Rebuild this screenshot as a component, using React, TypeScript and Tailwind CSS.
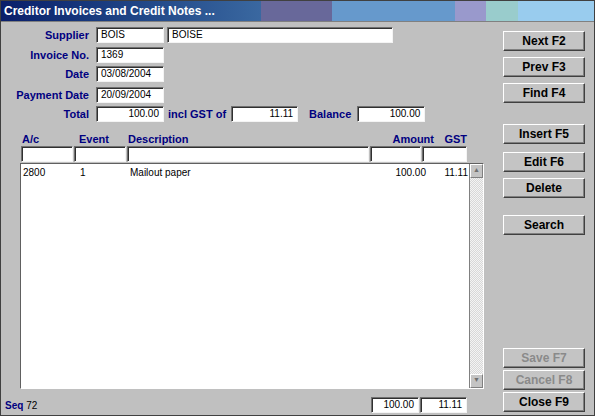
import React from 'react';

const font = { fontFamily: '"Liberation Sans", Arial, sans-serif' };

const Field = ({ w, value, right = false }: { w: string; value?: string; right?: boolean }) => (
  <div
    className={`${w} h-[16px] bg-white border border-t-[#707070] border-l-[#707070] border-b-[#f4f4f4] border-r-[#f4f4f4] shadow-[inset_1px_1px_0_#303030] text-[10px] leading-[14px] px-[4px] text-black whitespace-nowrap ${right ? 'text-right' : ''}`}
  >
    {value}
  </div>
);

const Label = ({ children }: { children: React.ReactNode }) => (
  <div className="w-[81px] text-right text-[11px] font-bold text-[#000080] leading-[16px] whitespace-nowrap">{children}</div>
);

const Btn = ({ label, disabled = false, mt }: { label: string; disabled?: boolean; mt: string }) => (
  <div
    className={`${mt} w-[82px] h-[20px] bg-[#c4c4c4] border border-t-white border-l-white border-b-[#404040] border-r-[#404040] shadow-[inset_-1px_-1px_0_#808080] flex items-center justify-center text-[12px] font-bold ${disabled ? 'text-[#8a8a8a]' : 'text-black'}`}
  >
    {label}
  </div>
);

export default function App() {
  return (
    <div className="w-[595px] h-[416px] bg-[#c0c0c0] border border-[#404040] flex flex-col overflow-hidden" style={font}>
      <div className="h-[20px] flex text-white text-[12px] font-bold shrink-0">
        <div className="w-[260px] bg-gradient-to-r from-[#0a1e6a] to-[#3a68a0] pl-[3px] leading-[20px] whitespace-nowrap">
          Creditor Invoices and Credit Notes ...
        </div>
        <div className="w-[71px] bg-[#68689a]" />
        <div className="w-[123px] bg-[#6699cc]" />
        <div className="w-[31px] bg-[#9999cc]" />
        <div className="w-[32px] bg-[#99cccc]" />
        <div className="flex-1 bg-[#99ccee]" />
      </div>
      <div className="flex flex-1 border-t border-[#808080]">
        <div className="flex-1 flex flex-col pl-[7px] pt-[5px]">
          <div className="flex items-center gap-[7px]">
            <Label>Supplier</Label>
            <Field w="w-[68px]" value="BOIS" />
            <Field w="w-[226px] ml-[-4px]" value="BOISE" />
          </div>
          <div className="flex items-center gap-[7px] mt-[4px]">
            <Label>Invoice No.</Label>
            <Field w="w-[68px]" value="1369" />
          </div>
          <div className="flex items-center gap-[7px] mt-[3px]">
            <Label>Date</Label>
            <Field w="w-[68px]" value="03/08/2004" />
          </div>
          <div className="flex items-center gap-[7px] mt-[5px]">
            <Label>Payment Date</Label>
            <Field w="w-[68px]" value="20/09/2004" />
          </div>
          <div className="flex items-center mt-[3px]">
            <Label>Total</Label>
            <Field w="w-[68px] ml-[7px]" value="100.00" right />
            <div className="text-[11px] font-bold text-[#000080] ml-[4px]">incl GST of</div>
            <Field w="w-[67px] ml-[5px]" value="11.11" right />
            <div className="text-[11px] font-bold text-[#000080] ml-[11px]">Balance</div>
            <Field w="w-[68px] ml-[6px]" value="100.00" right />
          </div>
          <div className="flex mt-[10px] ml-[14px] text-[11px] font-bold text-[#000080] leading-[12px]">
            <div className="w-[57px]">A/c</div>
            <div className="w-[49px]">Event</div>
            <div className="w-[253px]">Description</div>
            <div className="w-[53px] text-right">Amount</div>
            <div className="w-[33px] text-right">GST</div>
          </div>
          <div className="flex gap-[1px] mt-[1px] ml-[13px]">
            <Field w="w-[52px]" />
            <Field w="w-[52px]" />
            <Field w="w-[242px]" />
            <Field w="w-[51px]" />
            <Field w="w-[45px]" />
          </div>
          <div className="mt-[1px] ml-[12px] w-[464px] h-[226px] bg-white border border-t-[#606060] border-l-[#606060] border-b-white border-r-white flex">
            <div className="flex-1 flex text-[10px] leading-[14px] pt-[2px] pl-[2px] h-[16px] whitespace-nowrap">
              <div className="w-[57px]">2800</div>
              <div className="w-[50px]">1</div>
              <div className="w-[252px]">Mailout paper</div>
              <div className="w-[44px] text-right">100.00</div>
              <div className="w-[42px] text-right">11.11</div>
            </div>
            <div className="w-[14px] flex flex-col bg-[repeating-conic-gradient(#d8d8d8_0%_25%,#f4f4f4_0%_50%)] bg-[length:2px_2px] border-l border-[#808080]">
              <div className="h-[14px] bg-[#c4c4c4] border border-t-white border-l-white border-b-[#808080] border-r-[#808080] flex items-center justify-center text-[7px] text-[#707070]">▲</div>
              <div className="flex-1" />
              <div className="h-[14px] bg-[#c4c4c4] border border-t-white border-l-white border-b-[#808080] border-r-[#808080] flex items-center justify-center text-[7px] text-[#707070]">▼</div>
            </div>
          </div>
          <div className="flex items-end mt-[2px]">
            <div className="text-[10px] font-bold text-[#000080] leading-[14px] ml-[-3px] pt-[8px]">
              Seq <span className="font-normal text-black">72</span>
            </div>
            <div className="flex-1" />
            <div className="flex gap-[1px] mr-[36px]">
              <Field w="w-[48px]" value="100.00" right />
              <Field w="w-[47px]" value="11.11" right />
            </div>
          </div>
        </div>
        <div className="w-[91px] flex flex-col pt-[9px]">
          <Btn label="Next F2" mt="mt-0" />
          <Btn label="Prev F3" mt="mt-[6px]" />
          <Btn label="Find F4" mt="mt-[6px]" />
          <Btn label="Insert F5" mt="mt-[21px]" />
          <Btn label="Edit F6" mt="mt-[8px]" />
          <Btn label="Delete" mt="mt-[6px]" />
          <Btn label="Search" mt="mt-[17px]" />
          <Btn label="Save F7" disabled mt="mt-[113px]" />
          <Btn label="Cancel F8" disabled mt="mt-[2px]" />
          <Btn label="Close F9" mt="mt-[2px]" />
        </div>
      </div>
    </div>
  );
}
